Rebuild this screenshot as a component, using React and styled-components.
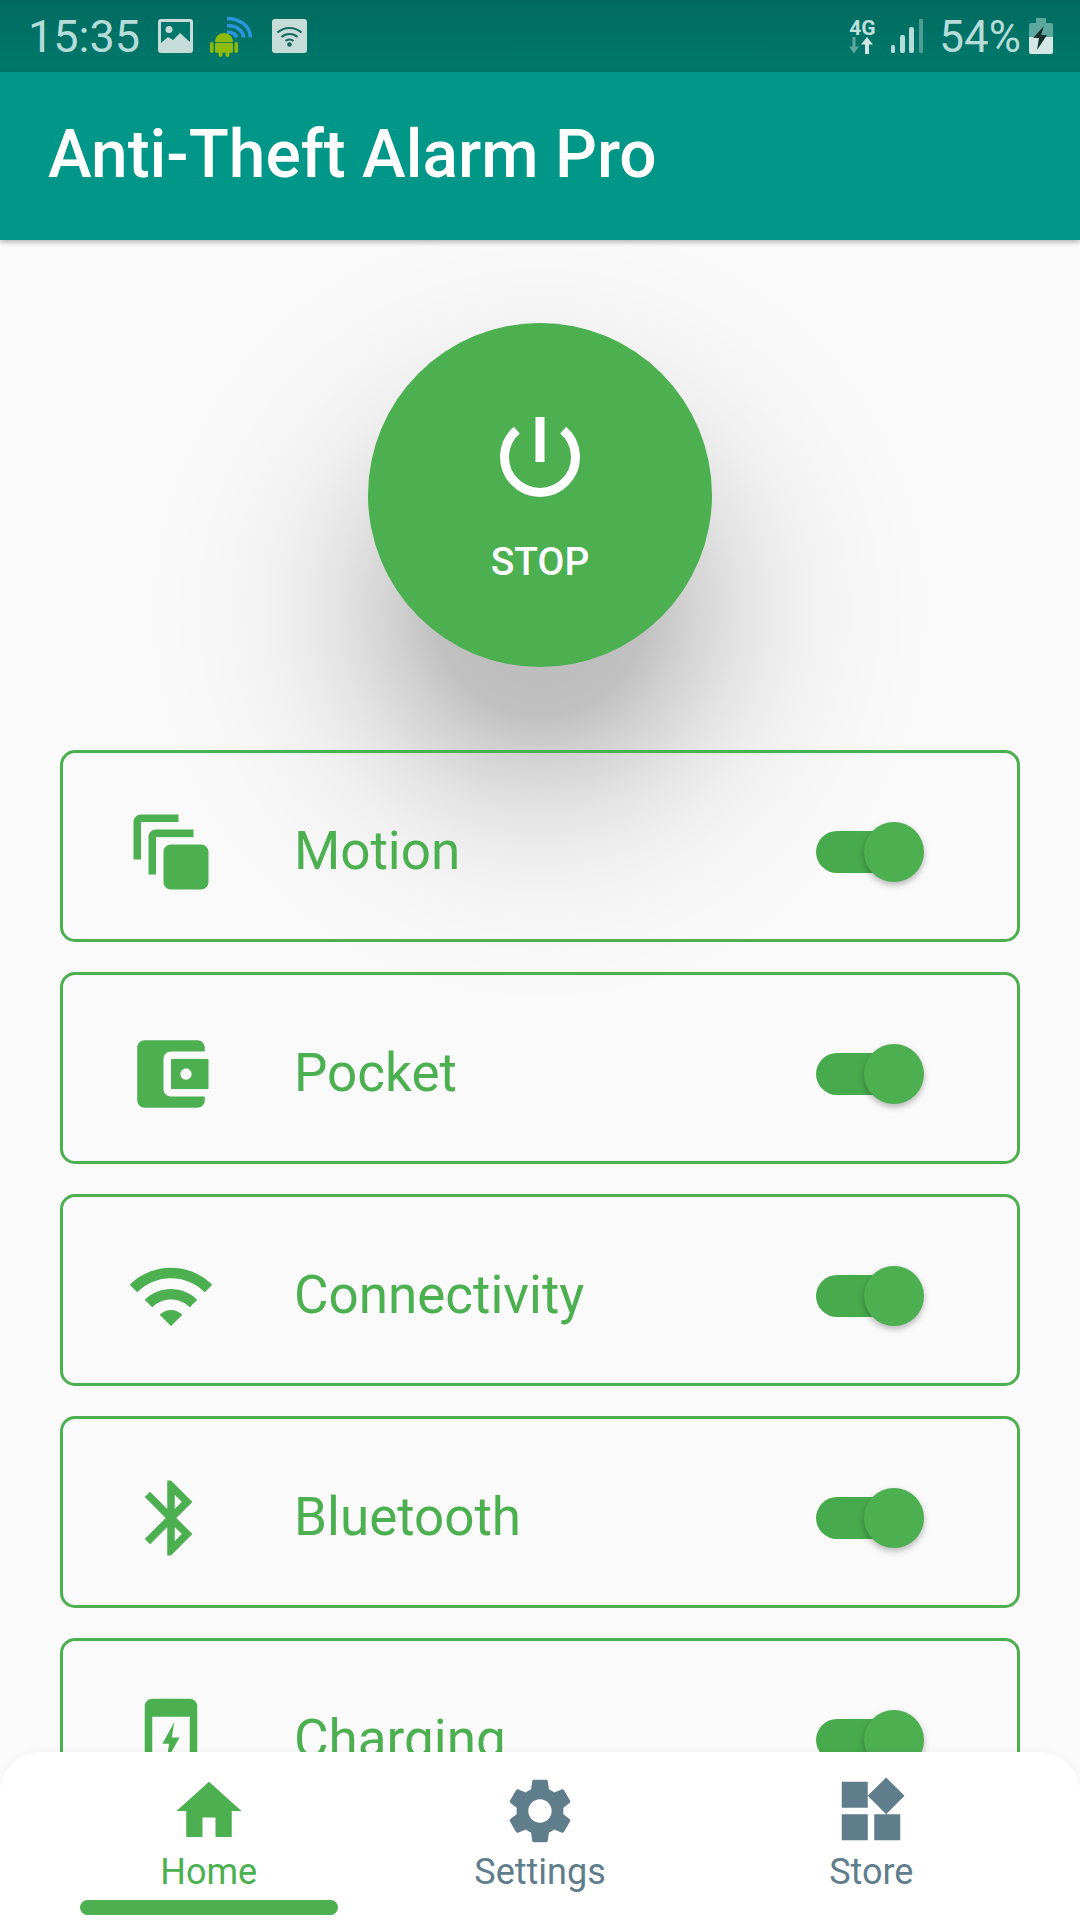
import React from 'react';
import styled, { createGlobalStyle } from 'styled-components';

const Global = createGlobalStyle`
  html, body { margin: 0; padding: 0; background: #fafafa; }
  * { box-sizing: border-box; }
`;

const GREEN = '#4caf50';
const SLATE = '#607d8b';
const MINT = '#b5dcd8';

const Page = styled.div`
  position: relative;
  isolation: isolate;
  width: 1080px;
  height: 1920px;
  overflow: hidden;
  display: flex;
  flex-direction: column;
  background: #fafafa;
  font-family: Roboto, "Noto Sans", sans-serif;
`;

const StatusBar = styled.div`
  flex: none;
  height: 72px;
  padding: 0 27px 0 28px;
  display: flex;
  align-items: center;
  justify-content: space-between;
  background: linear-gradient(#006a60, #00796c);
  color: ${MINT};
`;

const StatusGroup = styled.div`
  display: flex;
  align-items: center;
`;

const StatusText = styled.span`
  font-size: ${(p) => p.$size}px;
  font-weight: 400;
  line-height: 72px;
  padding-top: 2px;
  margin-right: ${(p) => p.$mr || 0}px;
`;

const StatusGlyph = styled.svg`
  display: block;
  flex: none;
  margin-right: ${(p) => p.$mr || 0}px;
`;

const NetBlock = styled.div`
  width: 28px;
  margin-right: 15px;
  display: flex;
  flex-direction: column;
  align-items: center;
`;

const NetLabel = styled.span`
  font-size: 21px;
  font-weight: 700;
  line-height: 18px;
  color: #bfe0dc;
`;

const AppBar = styled.header`
  flex: none;
  position: relative;
  z-index: 1;
  height: 168px;
  padding: 0 0 4px 48px;
  display: flex;
  align-items: center;
  background: #009688;
  box-shadow: 0 2px 5px rgba(0, 0, 0, 0.3);
`;

const Title = styled.h1`
  margin: 0;
  font-size: 65.8px;
  font-weight: 500;
  color: #fff;
`;

const Main = styled.main`
  flex: none;
  padding-top: 83px;
  display: flex;
  flex-direction: column;
  align-items: center;
`;

const PowerButton = styled.div`
  position: relative;
  width: 344px;
  height: 344px;
  margin-bottom: 83px;
  padding-top: 89px;
  border-radius: 50%;
  background: ${GREEN};
  display: flex;
  flex-direction: column;
  align-items: center;

  &::before {
    content: '';
    position: absolute;
    z-index: -1;
    left: -228px;
    top: -113px;
    width: 800px;
    height: 800px;
    background: radial-gradient(
      circle 400px at center,
      rgba(0, 0, 0, 0.26) 0,
      rgba(0, 0, 0, 0.23) 105px,
      rgba(0, 0, 0, 0.165) 145px,
      rgba(0, 0, 0, 0.085) 205px,
      rgba(0, 0, 0, 0.045) 255px,
      rgba(0, 0, 0, 0.02) 305px,
      rgba(0, 0, 0, 0.007) 350px,
      rgba(0, 0, 0, 0) 400px
    );
  }
`;

const PowerLabel = styled.span`
  margin-top: 37px;
  font-size: 39px;
  line-height: 46px;
  font-weight: 500;
  color: #fff;
`;

const CardList = styled.div`
  width: 960px;
  display: flex;
  flex-direction: column;
  gap: 30px;
`;

const Card = styled.div`
  flex: none;
  height: 192px;
  padding: 12px 93px 0 63px;
  border: 3px solid ${GREEN};
  border-radius: 15px;
  display: flex;
  align-items: center;
`;

const CardIcon = styled.svg`
  display: block;
  flex: none;
  width: 90px;
  height: 90px;
  fill: ${GREEN};
`;

const CardLabel = styled.span`
  flex: 1;
  margin: -2px 0 0 78px;
  font-size: 53px;
  line-height: 60px;
  color: ${GREEN};
`;

const Track = styled.div`
  position: relative;
  flex: none;
  width: 96px;
  height: 42px;
  margin-right: 12px;
  border-radius: 21px;
  background: #47aa4c;
`;

const Thumb = styled.div`
  position: absolute;
  top: -9px;
  right: -12px;
  width: 60px;
  height: 60px;
  border-radius: 50%;
  background: ${GREEN};
  box-shadow: 0 3px 6px rgba(0, 0, 0, 0.28);
`;

const BottomNav = styled.nav`
  position: absolute;
  left: 0;
  right: 0;
  bottom: 0;
  height: 168px;
  padding: 20px 43px 0;
  display: grid;
  grid-template-columns: repeat(3, 1fr);
  background: #fff;
  border-radius: 40px 40px 0 0;
  box-shadow: 0 -1px 6px rgba(0, 0, 0, 0.04);
`;

const NavItem = styled.div`
  display: flex;
  flex-direction: column;
  align-items: center;
  color: ${(p) => (p.$active ? GREEN : SLATE)};
`;

const NavIcon = styled.svg`
  display: block;
  width: 78px;
  height: 78px;
  fill: currentColor;
`;

const NavLabel = styled.span`
  margin-top: 1px;
  font-size: 36px;
  line-height: 42px;
`;

const Indicator = styled.div`
  width: 258px;
  height: 15px;
  margin-top: 7px;
  border-radius: 8px;
  background: ${GREEN};
`;

const iconPaths = {
  motion:
    'M4 14H2V4c0-1.1.9-2 2-2h10v2H4v10zM8 18H6V8c0-1.1.9-2 2-2h10v2H8v10zM12 10h8c1.1 0 2 .9 2 2v8c0 1.1-.9 2-2 2h-8c-1.1 0-2-.9-2-2v-8c0-1.1.9-2 2-2z',
  pocket:
    'M21 18v1c0 1.1-.9 2-2 2H5c-1.11 0-2-.9-2-2V5c0-1.1.89-2 2-2h14c1.1 0 2 .9 2 2v1h-9c-1.11 0-2 .9-2 2v8c0 1.1.89 2 2 2h9zm-9-2h10V8H12v8zm4-2.5c-.83 0-1.5-.67-1.5-1.5s.67-1.5 1.5-1.5 1.5.67 1.5 1.5-.67 1.5-1.5 1.5z',
  wifi:
    'M1 9l2 2c4.97-4.97 13.03-4.97 18 0l2-2C16.93 2.93 7.08 2.93 1 9zm8 8l3 3 3-3c-1.65-1.66-4.34-1.66-6 0zm-4-4l2 2c2.76-2.76 7.24-2.76 10 0l2-2C15.14 9.14 8.87 9.14 5 13z',
  bluetooth:
    'M17.71 7.71L12 2h-1v7.59L6.41 5 5 6.41 10.59 12 5 17.59 6.41 19 11 14.41V22h1l5.71-5.71-4.3-4.29 4.3-4.29zM13 5.83l1.88 1.88L13 9.59V5.83zm1.88 10.46L13 18.17v-3.76l1.88 1.88z',
  charging:
    'M7 1h10c1.1 0 2 .9 2 2v18c0 1.1-.9 2-2 2H7c-1.1 0-2-.9-2-2V3c0-1.1.9-2 2-2zm0 4.800V19h10V5.800zM12.900 7.200L9.700 13H11.500L10.800 17.500L14.300 11.300H12.200z',
};

const navPaths = {
  home: 'M10 20v-6h4v6h5v-8h3L12 3 2 12h3v8z',
  settings:
    'M19.14 12.94c.04-.3.06-.61.06-.94 0-.32-.02-.64-.07-.94l2.03-1.58c.18-.14.23-.41.12-.61l-1.92-3.32c-.12-.22-.37-.29-.59-.22l-2.39.96c-.5-.38-1.03-.7-1.62-.94l-.36-2.54c-.04-.24-.24-.41-.48-.41h-3.84c-.24 0-.43.17-.47.41l-.36 2.54c-.59.24-1.13.57-1.62.94l-2.39-.96c-.22-.08-.47 0-.59.22L2.74 8.87c-.12.21-.08.47.12.61l2.03 1.58c-.05.3-.09.63-.09.94s.02.64.07.94l-2.03 1.58c-.18.14-.23.41-.12.61l1.92 3.32c.12.22.37.29.59.22l2.39-.96c.5.38 1.03.7 1.62.94l.36 2.54c.05.24.24.41.48.41h3.84c.24 0 .44-.17.47-.41l.36-2.54c.59-.24 1.13-.56 1.62-.94l2.39.96c.22.08.47 0 .59-.22l1.92-3.32c.12-.22.07-.47-.12-.61l-2.01-1.58zM12 15.6c-1.98 0-3.6-1.62-3.6-3.6s1.62-3.6 3.6-3.6 3.6 1.62 3.6 3.6-1.62 3.6-3.6 3.6z',
  store: 'M13 13v8h8v-8h-8zM3 21h8v-8H3v8zM3 3v8h8V3H3zm13.66-1.31L11 7.34 16.66 13l5.66-5.66-5.66-5.65z',
};

const sensors = [
  { label: 'Motion', icon: 'motion' },
  { label: 'Pocket', icon: 'pocket' },
  { label: 'Connectivity', icon: 'wifi' },
  { label: 'Bluetooth', icon: 'bluetooth' },
  { label: 'Charging', icon: 'charging' },
];

const tabs = [
  { label: 'Home', icon: 'home', active: true },
  { label: 'Settings', icon: 'settings' },
  { label: 'Store', icon: 'store' },
];

const GalleryGlyph = () => (
  <StatusGlyph width="35" height="34" viewBox="0 0 35 34" $mr={17}>
    <rect width="35" height="34" rx="3" fill="#c6dcd9" />
    <rect x="3" y="3" width="29" height="25" fill="#00766a" />
    <circle cx="11" cy="10.500" r="3.500" fill="#c6dcd9" />
    <path d="M3 24l7-6 5 3 7-7 10 9v5H3z" fill="#c6dcd9" />
  </StatusGlyph>
);

const AndroidGlyph = () => (
  <StatusGlyph width="42" height="42" viewBox="0 0 42 42" $mr={20}>
    <g fill="none" stroke="#2b96dc" strokeWidth="3.600">
      <path d="M17 3.500C30 3.500 40 11 40.500 22.500" />
      <path d="M17 10.500C26 10.500 33 15 33.500 22.500" />
      <path d="M17 17C21.500 17 26 19 26.500 22.500" />
    </g>
    <g fill="#8cba0d">
      <path d="M5 27c0-5.500 4-9 9-9s9 3.500 9 9z" />
      <rect x="5" y="27.800" width="18" height="10" rx="1.500" />
      <rect x="0" y="27" width="3.600" height="11" rx="1.800" />
      <rect x="24.400" y="27" width="3.600" height="11" rx="1.800" />
      <rect x="8.500" y="36" width="4" height="6" rx="2" />
      <rect x="15.500" y="36" width="4" height="6" rx="2" />
    </g>
  </StatusGlyph>
);

const WifiTile = () => (
  <StatusGlyph width="35" height="34" viewBox="0 0 35 34">
    <rect width="35" height="34" rx="3" fill="#c6dcd9" />
    <g fill="none" stroke="#16685f" strokeWidth="2.200">
      <path d="M5.500 13.500c7-6 17-6 24 0" />
      <path d="M9.500 18c4.500-4 11.500-4 16 0" />
      <path d="M13.500 22c2.300-2 5.700-2 8 0" />
    </g>
    <circle cx="17.500" cy="25.500" r="2.300" fill="#16685f" />
  </StatusGlyph>
);

const ArrowsGlyph = () => (
  <StatusGlyph width="28" height="17" viewBox="0 0 28 17">
    <path d="M4.500 0h3v9.500H11L6 16.500 1 9.500h3.500z" fill="#5ea79e" />
    <path d="M19 0l6 7.500h-4V17h-4V7.500h-4z" fill="#d0e8e5" />
  </StatusGlyph>
);

const SignalGlyph = () => (
  <StatusGlyph width="32" height="34" viewBox="0 0 32 34" $mr={16}>
    <rect x="0" y="26" width="4" height="8" rx="1.500" fill={MINT} />
    <rect x="9" y="16" width="5" height="18" rx="2" fill={MINT} />
    <rect x="18" y="8" width="5" height="26" rx="2" fill={MINT} />
    <rect x="28" y="0" width="4" height="34" rx="1" fill="#4f9d93" />
  </StatusGlyph>
);

const BatteryGlyph = () => (
  <StatusGlyph width="24" height="36" viewBox="0 0 24 36">
    <path d="M7 0h10v5h5c1.100 0 2 .9 2 2v12H0V7c0-1.100.9-2 2-2h5z" fill="#5da79d" />
    <path d="M0 19h24v15c0 1.100-.9 2-2 2H2c-1.100 0-2-.9-2-2z" fill="#d3e8e5" />
    <path d="M15 8L4 20h6L8 32 18 17h-6z" fill="#15302d" />
  </StatusGlyph>
);

export default function App() {
  return (
    <Page>
      <Global />
      <StatusBar>
        <StatusGroup>
          <StatusText $size={45} $mr={18}>15:35</StatusText>
          <GalleryGlyph />
          <AndroidGlyph />
          <WifiTile />
        </StatusGroup>
        <StatusGroup>
          <NetBlock>
            <NetLabel>4G</NetLabel>
            <ArrowsGlyph />
          </NetBlock>
          <SignalGlyph />
          <StatusText $size={44} $mr={8}>54%</StatusText>
          <BatteryGlyph />
        </StatusGroup>
      </StatusBar>
      <AppBar>
        <Title>Anti-Theft Alarm Pro</Title>
      </AppBar>
      <Main>
        <PowerButton>
          <svg width="90" height="90" viewBox="0 0 90 90" fill="none" stroke="#fff" strokeWidth="9">
            <path d="M21.800 18.100A35.500 35.500 0 1 0 68.200 18.100" />
            <path d="M45 5V50" />
          </svg>
          <PowerLabel>STOP</PowerLabel>
        </PowerButton>
        <CardList>
          {sensors.map((s) => (
            <Card key={s.label}>
              <CardIcon viewBox="0 0 24 24">
                <path fillRule="evenodd" d={iconPaths[s.icon]} />
              </CardIcon>
              <CardLabel>{s.label}</CardLabel>
              <Track>
                <Thumb />
              </Track>
            </Card>
          ))}
        </CardList>
      </Main>
      <BottomNav>
        {tabs.map((t) => (
          <NavItem key={t.label} $active={t.active}>
            <NavIcon viewBox="0 0 24 24">
              <path d={navPaths[t.icon]} />
            </NavIcon>
            <NavLabel>{t.label}</NavLabel>
            {t.active && <Indicator />}
          </NavItem>
        ))}
      </BottomNav>
    </Page>
  );
}
